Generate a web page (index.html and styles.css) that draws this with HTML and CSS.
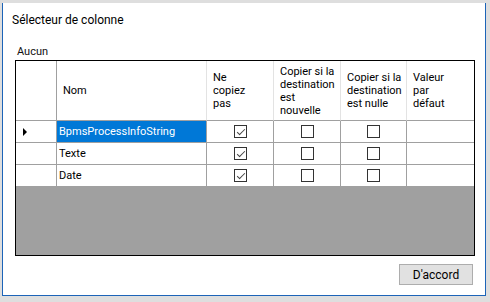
FILE: index.html
```html
<!DOCTYPE html>
<html lang="fr">
<head>
    <title>Sélecteur de colonne</title>
    <link rel="stylesheet" href="styles.css">
</head>
<body>

    <div class="dialog">
        <div class="dialog-title">Sélecteur de colonne</div>
        <div class="grid-label">Aucun</div>

        <div class="grid">
            <div class="row head">
                <div class="cell rowhead"></div>
                <div class="cell c-name"><span>Nom</span></div>
                <div class="cell c-chk"><span>Ne<br>copiez<br>pas</span></div>
                <div class="cell c-chk"><span>Copier si la<br>destination<br>est<br>nouvelle</span></div>
                <div class="cell c-chk2"><span>Copier si la<br>destination<br>est nulle</span></div>
                <div class="cell c-val"><span>Valeur<br>par<br>défaut</span></div>
            </div>

            <div class="row">
                <div class="cell rowhead"><i class="arrow"></i></div>
                <div class="cell c-name selected">BpmsProcessInfoString</div>
                <div class="cell c-chk"><span class="box checked"></span></div>
                <div class="cell c-chk"><span class="box"></span></div>
                <div class="cell c-chk2"><span class="box"></span></div>
                <div class="cell c-val"></div>
            </div>

            <div class="row">
                <div class="cell rowhead"></div>
                <div class="cell c-name">Texte</div>
                <div class="cell c-chk"><span class="box checked"></span></div>
                <div class="cell c-chk"><span class="box"></span></div>
                <div class="cell c-chk2"><span class="box"></span></div>
                <div class="cell c-val"></div>
            </div>

            <div class="row">
                <div class="cell rowhead"></div>
                <div class="cell c-name">Date</div>
                <div class="cell c-chk"><span class="box checked"></span></div>
                <div class="cell c-chk"><span class="box"></span></div>
                <div class="cell c-chk2"><span class="box"></span></div>
                <div class="cell c-val"></div>
            </div>

            <div class="empty"></div>
        </div>

        <div class="actions">
            <button type="button">D'accord</button>
        </div>
    </div>

</body>
</html>
```

FILE: styles.css
```css
body {
    font-family: Roboto, 'Liberation Sans', sans-serif;
    font-size: 11px;
    color: #000;
    background-color: #dedede;
    margin: 0;
    padding: 3px 0 0 2px;
    height: 302px;
    box-sizing: border-box;
    overflow: hidden;
}

.dialog {
    width: 482px;
    height: 292px;
    background-color: #fff;
    border: 1px solid #1c64b8;
    border-top: none;
    box-sizing: content-box;
    display: flex;
    flex-direction: column;
}

.dialog-title {
    padding: 10px 0 0 9px;
    height: 22px;
    line-height: 14px;
    font-size: 12px;
}

.grid-label {
    padding: 10px 0 0 14px;
    height: 15px;
    line-height: 14px;
    color: #111;
}

.grid {
    margin-left: 12px;
    width: 458px;
    height: 194px;
    border: 1px solid #000;
    display: flex;
    flex-direction: column;
}

.row {
    display: flex;
    height: 22px;
}

.row.head {
    height: 60px;
}

.cell {
    box-sizing: border-box;
    border-right: 1px solid #a0a0a0;
    border-bottom: 1px solid #a0a0a0;
    display: flex;
    align-items: center;
    white-space: nowrap;
    overflow: hidden;
    padding-left: 2px;
    line-height: 13px;
}

.head .cell {
    border-right-color: #e3e3e3;
    padding-left: 6px;
}

.head .rowhead {
    border-right-color: #a0a0a0;
}

.rowhead {
    width: 41px;
    padding-left: 0;
}

.c-name {
    width: 150px;
}

.c-chk {
    width: 67px;
}

.c-chk2 {
    width: 66px;
}

.c-val {
    width: 67px;
    border-right: none;
}

.row:not(.head) .c-chk,
.row:not(.head) .c-chk2 {
    justify-content: center;
    padding-left: 0;
}

.selected {
    background-color: #0078d7;
    color: #fff;
}

.arrow {
    width: 0;
    height: 0;
    margin-left: 7px;
    border-top: 4px solid transparent;
    border-bottom: 4px solid transparent;
    border-left: 4px solid #000;
}

.box {
    width: 13px;
    height: 13px;
    box-sizing: border-box;
    border: 1px solid #333;
    position: relative;
}

.box.checked::after {
    content: '';
    position: absolute;
    left: 2px;
    top: 1px;
    width: 7px;
    height: 3px;
    border-left: 1px solid #444;
    border-bottom: 1px solid #444;
    transform: translateY(2px) rotate(-45deg);
}

.empty {
    flex: 1;
    background-color: #a0a0a0;
}

.actions {
    display: flex;
    justify-content: flex-end;
    padding: 8px 12px 0 0;
}

button {
    width: 74px;
    height: 21px;
    font-family: inherit;
    font-size: 12px;
    color: #000;
    background-color: #e1e1e1;
    border: 1px solid #adadad;
    border-radius: 0;
    padding: 0;
}
```
